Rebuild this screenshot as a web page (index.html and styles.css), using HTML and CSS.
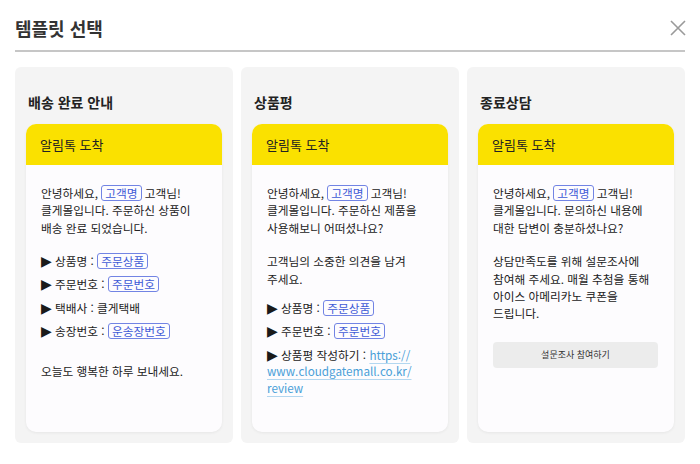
FILE: index.html
```html
<!DOCTYPE html>
<html lang="ko">
<head>
<meta charset="utf-8">
<title>템플릿 선택</title>
<link rel="stylesheet" href="styles.css">
</head>
<body>
<div class="modal">
  <header class="modal-header">
    <h1 class="modal-title">템플릿 선택</h1>
    <button class="close-btn" aria-label="닫기">
      <svg width="16" height="16" viewBox="0 0 16 16"><path d="M1 1 L15 15 M15 1 L1 15" stroke="#9a9a9a" stroke-width="1.6" fill="none"/></svg>
    </button>
  </header>
  <div class="templates">
    <section class="template">
      <h2 class="template-title">배송 완료 안내</h2>
      <div class="message">
        <div class="message-head">알림톡 도착</div>
        <div class="message-body">
          <p>안녕하세요, <span class="tag">고객명</span> 고객님!<br>클게몰입니다. 주문하신 상품이<br>배송 완료 되었습니다.</p>
          <ul class="fields">
            <li><span class="arrow">▶</span> 상품명 : <span class="tag">주문상품</span></li>
            <li><span class="arrow">▶</span> 주문번호 : <span class="tag">주문번호</span></li>
            <li><span class="arrow">▶</span> 택배사 : 클게택배</li>
            <li><span class="arrow">▶</span> 송장번호 : <span class="tag">운송장번호</span></li>
          </ul>
          <p class="closing">오늘도 행복한 하루 보내세요.</p>
        </div>
      </div>
    </section>
    <section class="template">
      <h2 class="template-title">상품평</h2>
      <div class="message">
        <div class="message-head">알림톡 도착</div>
        <div class="message-body">
          <p>안녕하세요, <span class="tag">고객명</span> 고객님!<br>클게몰입니다. 주문하신 제품을<br>사용해보니 어떠셨나요?</p>
          <p class="gap">고객님의 소중한 의견을 남겨<br>주세요.</p>
          <ul class="fields fields-tight">
            <li><span class="arrow">▶</span> 상품명 : <span class="tag">주문상품</span></li>
            <li><span class="arrow">▶</span> 주문번호 : <span class="tag">주문번호</span></li>
            <li><span class="arrow">▶</span> 상품평 작성하기 : <a class="link" href="#">https://<br>www.cloudgatemall.co.kr/<br>review</a></li>
          </ul>
        </div>
      </div>
    </section>
    <section class="template">
      <h2 class="template-title">종료상담</h2>
      <div class="message">
        <div class="message-head">알림톡 도착</div>
        <div class="message-body">
          <p>안녕하세요, <span class="tag">고객명</span> 고객님!<br>클게몰입니다. 문의하신 내용에<br>대한 답변이 충분하셨나요?</p>
          <p class="gap">상담만족도를 위해 설문조사에<br>참여해 주세요. 매월 추첨을 통해<br>아이스 아메리카노 쿠폰을<br>드립니다.</p>
          <button class="survey-btn">설문조사 참여하기</button>
        </div>
      </div>
    </section>
  </div>
</div>
</body>
</html>
```

FILE: styles.css
```css
* { box-sizing: border-box; }
html, body {
  margin: 0;
  padding: 0;
  background: #ffffff;
}
body {
  font-family: "Noto Sans CJK KR", "Noto Sans", sans-serif;
  color: #222222;
}
.modal {
  padding: 0 15px;
}
.modal-header {
  display: flex;
  align-items: center;
  justify-content: space-between;
  height: 52px;
  padding-top: 6px;
  border-bottom: 2px solid #c6c6c6;
}
.modal-title {
  margin: 0;
  font-size: 18px;
  font-weight: 700;
  color: #333333;
  line-height: 24px;
}
.close-btn {
  border: 0;
  background: none;
  padding: 0;
  margin-right: -1px;
  width: 16px;
  height: 16px;
  display: flex;
}
.templates {
  display: grid;
  grid-template-columns: repeat(3, 1fr);
  gap: 8px;
  margin-top: 15px;
}
.template {
  background: #f4f4f4;
  border-radius: 6px;
  height: 376px;
  padding: 25px 11px 11px;
  display: flex;
  flex-direction: column;
}
.template-title {
  margin: 0 0 12px 2px;
  font-size: 14px;
  font-weight: 700;
  line-height: 20px;
  color: #222222;
}
.message {
  flex: 1;
  background: #fdfcfe;
  border-radius: 10px;
  overflow: hidden;
  box-shadow: 0 1px 3px rgba(0, 0, 0, 0.06);
}
.message-head {
  background: #fae100;
  height: 41px;
  display: flex;
  align-items: center;
  padding-left: 14px;
  font-size: 13px;
  color: #222222;
}
.message-body {
  padding: 19px 16px 0 15px;
  font-size: 11.7px;
  line-height: 17.4px;
  color: #222222;
}
.message-body p {
  margin: 0;
  white-space: nowrap;
}
.message-body p.gap {
  margin-top: 16px;
}
.message-body p.closing {
  margin-top: 19px;
}
.tag {
  display: inline-block;
  border: 1px solid #7284e4;
  border-radius: 3px;
  padding: 0 3px;
  line-height: 14px;
  color: #3f5ad6;
}
.arrow {
  font-family: "DejaVu Sans", sans-serif;
  font-size: 14px;
  line-height: 0;
  color: #1a1a1a;
}
.fields {
  list-style: none;
  margin: 13px 0 0;
  padding: 0;
}
.fields-tight {
  margin-top: 9px;
}
.fields li {
  line-height: 16.5px;
  padding: 3.5px 0;
  white-space: nowrap;
}
.link {
  color: #4a9fd8;
  text-decoration: underline;
  text-decoration-color: #b3d7f0;
  text-underline-offset: 3px;
}
.survey-btn {
  display: block;
  width: 100%;
  height: 26px;
  margin-top: 20px;
  border: 0;
  border-radius: 4px;
  background: #ececec;
  font-family: "Noto Sans CJK KR", "Noto Sans", sans-serif;
  font-size: 9px;
  color: #333333;
}
```
